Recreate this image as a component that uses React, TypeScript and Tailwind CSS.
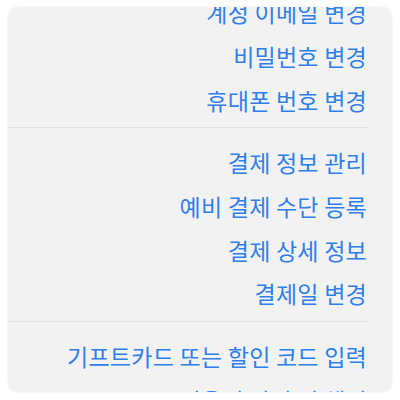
import React from 'react';

const groups: string[][] = [
  ['계정 이메일 변경', '비밀번호 변경', '휴대폰 번호 변경'],
  ['결제 정보 관리', '예비 결제 수단 등록', '결제 상세 정보', '결제일 변경'],
  ['기프트카드 또는 할인 코드 입력', '이용권 관리 및 해지'],
];

export default function App() {
  return (
    <div className="w-[400px] h-[400px] bg-white p-[8px] pt-[7px]">
      <div
        className="h-full bg-[#f2f2f2] rounded-[10px] overflow-hidden shadow-[0_0_3px_rgba(0,0,0,0.08)]"
        style={{ fontFamily: '"Noto Sans CJK KR", "Noto Sans", sans-serif' }}
      >
        <div className="flex flex-col mt-[-16px]">
          {groups.map((items, gi) => (
            <div key={gi} className="flex flex-col">
              {gi > 0 && <div className="h-px bg-[#e2e2e2] mr-[24px] mt-[5px] mb-[13px]" />}
              {items.map((label) => (
                <div
                  key={label}
                  className="h-[43.7px] flex items-center justify-end pr-[25px] text-[23px] tracking-[0.25px] text-[#2f80ed] leading-none whitespace-nowrap"
                >
                  {label}
                </div>
              ))}
            </div>
          ))}
        </div>
      </div>
    </div>
  );
}
